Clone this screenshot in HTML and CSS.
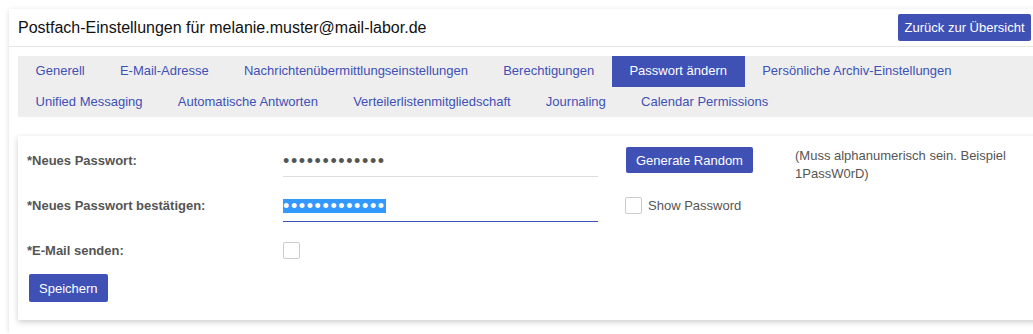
FILE: index.html
```html
<!DOCTYPE html>
<html lang="de">
<head>
  <meta charset="UTF-8" />
  <title>Postfach-Einstellungen</title>
  <link rel="stylesheet" href="styles.css">
</head>
<body>
  <div class="card">
    <div class="card-head">
      <h1 class="title">Postfach-Einstellungen für melanie.muster@mail-labor.de</h1>
      <button class="btn btn-back">Zurück zur Übersicht</button>
    </div>

    <ul class="tabs">
      <li>Generell</li>
      <li>E-Mail-Adresse</li>
      <li>Nachrichtenübermittlungseinstellungen</li>
      <li>Berechtigungen</li>
      <li class="active">Passwort ändern</li>
      <li>Persönliche Archiv-Einstellungen</li>
      <li>Unified Messaging</li>
      <li>Automatische Antworten</li>
      <li>Verteilerlistenmitgliedschaft</li>
      <li>Journaling</li>
      <li>Calendar Permissions</li>
    </ul>

    <form class="panel">
      <div class="form-grid">
        <label class="field-label">*Neues Passwort:</label>
        <div class="field"><span class="pw">•••••••••••••</span></div>
        <div class="action"><button type="button" class="btn btn-gen">Generate Random</button></div>
        <p class="hint">(Muss alphanumerisch sein. Beispiel 1PassW0rD)</p>

        <label class="field-label">*Neues Passwort bestätigen:</label>
        <div class="field focused"><span class="pw selected">•••••••••••••</span></div>
        <div class="action check-row"><span class="checkbox"></span><span class="check-text">Show Password</span></div>
        <div></div>

        <label class="field-label">*E-Mail senden:</label>
        <div class="check-row"><span class="checkbox"></span></div>
        <div></div>
        <div></div>
      </div>
      <button type="button" class="btn btn-save">Speichern</button>
    </form>
  </div>
</body>
</html>
```

FILE: styles.css
```css
body {
  margin: 0;
  background: #fff;
  font-family: "Liberation Sans", Arial, sans-serif;
  font-size: 13px;
  color: #555;
  overflow: hidden;
}

.card {
  margin: 9px 0 0 9px;
  width: 1040px;
  padding-bottom: 13px;
  background: #fff;
  box-shadow: 0 1px 5px rgba(0,0,0,0.15);
}

.card-head {
  display: flex;
  justify-content: space-between;
  align-items: center;
  padding: 5px 18px 5px 9px;
  border-bottom: 1px solid #e6e6e6;
}

.title {
  margin: 0;
  font-size: 16px;
  font-weight: normal;
  color: #111;
}

.btn {
  border: none;
  border-radius: 2px;
  background: #3f51b5;
  color: #fff;
  font-family: "Liberation Sans", Arial, sans-serif;
  font-size: 13px;
  cursor: pointer;
}

.btn-back {
  height: 27px;
  padding: 0 6.5px;
}

.tabs {
  display: flex;
  flex-wrap: wrap;
  list-style: none;
  margin: 9px 0 0 9px;
  padding: 0;
  background: #eee;
}

.tabs li {
  padding: 0 17.6px;
  line-height: 30.5px;
  color: #3f51b5;
  cursor: pointer;
}

.tabs li.active {
  background: #3f51b5;
  color: #fff;
}

.panel {
  margin: 19px 0 0 9px;
  padding: 2px 0 18px 9px;
  background: #fff;
  box-shadow: 0 2px 6px rgba(0,0,0,0.2);
}

.form-grid {
  display: grid;
  grid-template-columns: 256px 315px 197px 1fr;
  grid-auto-rows: 45px;
}

.field-label {
  font-weight: bold;
  line-height: 45px;
}

.field {
  margin-top: 8px;
  height: 30px;
  border-bottom: 1px solid #ddd;
  display: flex;
  align-items: center;
}

.field.focused {
  border-bottom-color: #3f51b5;
}

.pw {
  font-size: 18px;
  letter-spacing: 1.6px;
  line-height: 14px;
  color: #555;
}

.pw.selected {
  background: #3399ff;
  color: #fff;
}

.action {
  padding-left: 28px;
}

.btn-gen {
  margin-top: 9px;
  height: 26px;
  padding: 0 10px;
}

.hint {
  margin: 9px 0 0;
  width: 225px;
  line-height: 18px;
}

.check-row {
  display: flex;
  align-items: center;
  gap: 6px;
}

.action.check-row {
  padding-left: 27px;
}

.checkbox {
  width: 15px;
  height: 15px;
  border: 1px solid #ccc;
  border-radius: 2px;
  background: #fff;
}

.btn-save {
  margin: 1px 0 0 2px;
  height: 28px;
  padding: 0 10px;
}
```
